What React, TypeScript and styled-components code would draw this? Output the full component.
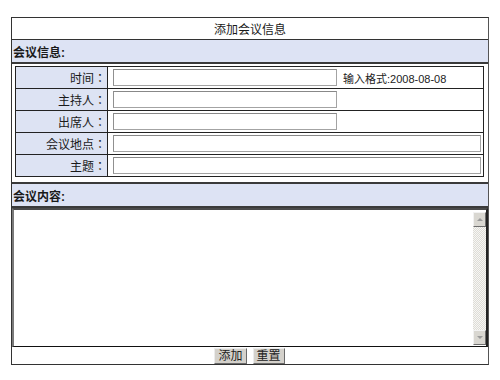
import { FC } from 'react'
import styled, { createGlobalStyle } from 'styled-components';

const GlobalStyle = createGlobalStyle`
    body {
        margin: 0;
        background: #fff;
        color: #1a1a1a;
        font-family: "Liberation Sans", "Noto Sans CJK SC", sans-serif;
        font-size: 12px;
    }
`;

const Page = styled.div`
    padding: 17px 0 0 11px;
`;

const Frame = styled.form`
    width: 476px;
    border: 1px solid #333;
    border-right-color: #555;
    display: flex;
    flex-direction: column;
`;

const TitleRow = styled.div`
    height: 21px;
    border-bottom: 1px solid #333;
    display: flex;
    align-items: center;
    justify-content: center;
`;

const SectionHeader = styled.div<{ $topBorder?: boolean }>`
    height: 22px;
    margin-top: ${p => (p.$topBorder ? '5px' : '0')};
    background-color: #dde3f4;
    border-top: ${p => (p.$topBorder ? '2px solid #3a3a3a' : 'none')};
    border-bottom: 2px solid #3a3a3a;
    display: flex;
    align-items: center;
    padding-left: 1px;
    font-weight: bold;
`;

const InfoTable = styled.div`
    margin: 2px 4px 0 3px;
    border: 1px solid #222;
    display: flex;
    flex-direction: column;
`;

const Row = styled.div`
    display: grid;
    grid-template-columns: 92px 1fr;
    height: 21px;
    border-bottom: 1px solid #222;

    &:last-child {
        border-bottom: none;
    }
`;

// JP face centres the full-width colon, as the original page font does
const Label = styled.div`
    background-color: #dde3f3;
    border-right: 1px solid #222;
    text-align: right;
    line-height: 21px;
    padding-right: 1px;
    font-family: "Noto Sans CJK JP", sans-serif;
`;

const FieldCell = styled.div`
    display: flex;
    align-items: center;
    gap: 6px;
    padding: 0 2px 0 5px;
`;

const TextInput = styled.input<{ $full?: boolean }>`
    box-sizing: border-box;
    width: ${p => (p.$full ? '100%' : '224px')};
    height: 17px;
    margin: 0;
    padding: 0 2px;
    border: 1px solid #a3a3a3;
    border-top-color: #888;
    border-left-color: #909090;
    background: #fff;
    font: inherit;
    outline: none;
`;

const Hint = styled.span`
    color: #222;
    font-size: 11px;
`;

const ContentBox = styled.div`
    height: 136px;
    display: flex;
    border-top: 2px solid #4a4a4a;
    border-left: 2px solid #7a7a7a;
    border-right: 2px solid #222;
    border-bottom: 1px solid #111;
`;

const ContentArea = styled.textarea`
    flex: 1;
    border: none;
    margin: 0;
    padding: 2px;
    resize: none;
    outline: none;
    overflow: hidden;
    font: inherit;
`;

const ScrollBar = styled.div`
    width: 13px;
    display: flex;
    flex-direction: column;
`;

const ScrollButton = styled.div<{ $down?: boolean }>`
    box-sizing: border-box;
    height: 15px;
    margin-top: ${p => (p.$down ? '0' : '2px')};
    margin-bottom: ${p => (p.$down ? '1px' : '0')};
    background-color: #d9d7d1;
    border: 1px solid;
    border-color: #f2f2f2 #6f6f6f #6f6f6f #f2f2f2;
    display: flex;
    align-items: center;
    justify-content: center;

    &::after {
        content: '';
        width: 0;
        height: 0;
        border-left: 3px solid transparent;
        border-right: 3px solid transparent;
        border-${p => (p.$down ? 'top' : 'bottom')}: 3px solid #9a9a9a;
    }
`;

const ScrollTrack = styled.div`
    flex: 1;
    background: repeating-conic-gradient(#dedcd6 0 25%, #f6f6f4 0 50%) 0 0 / 2px 2px;
`;

const ButtonRow = styled.div`
    height: 17px;
    display: flex;
    justify-content: center;
    align-items: flex-start;
    gap: 6px;
    padding-right: 1px;
`;

const FormButton = styled.button`
    box-sizing: border-box;
    height: 16px;
    margin-top: 1px;
    padding: 0 3px;
    background-color: #d4d1cb;
    border: 1px solid;
    border-color: #ececec #6a6a6a #6a6a6a #ececec;
    font: inherit;
    line-height: 14px;
    color: #222;
`;

interface Field {
    label: string;
    full?: boolean;
    hint?: string;
}

const fields: Field[] = [
    { label: '时间：', hint: '输入格式:2008-08-08' },
    { label: '主持人：' },
    { label: '出席人：' },
    { label: '会议地点：', full: true },
    { label: '主题：', full: true },
];

const App: FC = () => {
    return (
        <Page>
            <GlobalStyle />
            <Frame onSubmit={e => e.preventDefault()}>
                <TitleRow>添加会议信息</TitleRow>
                <SectionHeader>会议信息:</SectionHeader>
                <InfoTable>
                    {fields.map(f => (
                        <Row key={f.label}>
                            <Label>{f.label}</Label>
                            <FieldCell>
                                <TextInput $full={f.full} />
                                {f.hint && <Hint>{f.hint}</Hint>}
                            </FieldCell>
                        </Row>
                    ))}
                </InfoTable>
                <SectionHeader $topBorder>会议内容:</SectionHeader>
                <ContentBox>
                    <ContentArea />
                    <ScrollBar>
                        <ScrollButton />
                        <ScrollTrack />
                        <ScrollButton $down />
                    </ScrollBar>
                </ContentBox>
                <ButtonRow>
                    <FormButton type="submit">添加</FormButton>
                    <FormButton type="reset">重置</FormButton>
                </ButtonRow>
            </Frame>
        </Page>
    );
};

export default App;
